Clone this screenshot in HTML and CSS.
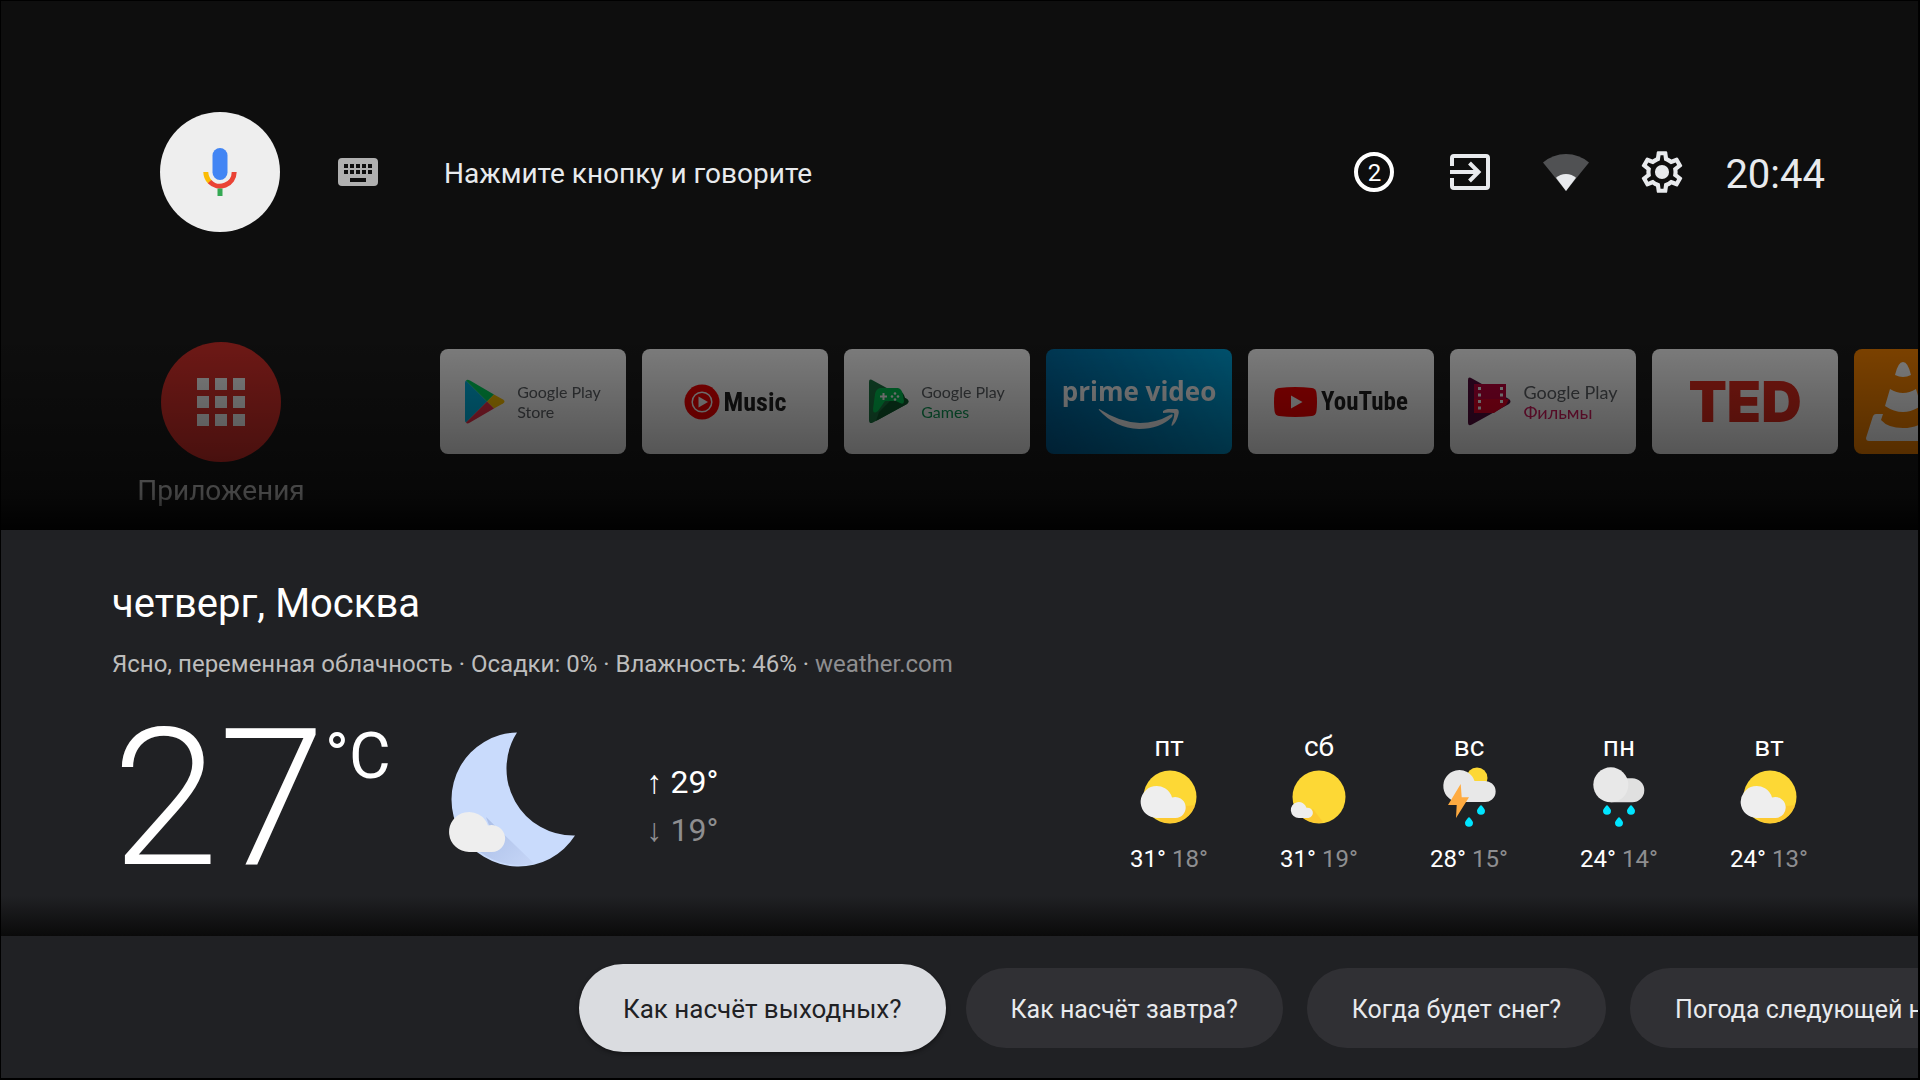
FILE: index.html
```html
<!DOCTYPE html>
<html lang="ru">
<head>
  <meta charset="UTF-8" />
  <meta name="viewport" content="width=device-width, initial-scale=1.0"/>
  <title>Android TV</title>
  <link rel="stylesheet" href="styles.css">
</head>
<body>

  <header class="top-bar">
    <button class="mic-btn" aria-label="Голосовой поиск">
      <svg width="48" height="48" viewBox="0 0 48 48">
        <rect x="16.5" y="0" width="15" height="32" rx="7.5" fill="#4285f4"/>
        <path d="M9.8 24A14.2 14.2 0 0 0 14 34" fill="none" stroke="#fbbc05" stroke-width="5"/>
        <path d="M13.6 33.6A14.2 14.2 0 0 0 38.2 24" fill="none" stroke="#ea4335" stroke-width="5"/>
        <path d="M21.5 40.5h5V48h-5z" fill="#34a853"/>
      </svg>
    </button>
    <button class="icon-btn keyboard-btn" aria-label="Клавиатура">
      <svg width="40" height="28" viewBox="0 0 40 28">
        <rect width="40" height="28" rx="4" fill="#b0b0b0"/>
        <path d="M6 8H34M6 14H34" stroke="#0e0e0e" stroke-width="4" stroke-dasharray="4 2"/>
        <path d="M12 20h16v4H12z" fill="#0e0e0e"/>
      </svg>
    </button>
    <p class="hint">Нажмите кнопку и говорите</p>

    <div class="status">
      <button class="icon-btn badge-btn" aria-label="Уведомления: 2"><span class="count">2</span></button>
      <button class="icon-btn" aria-label="Источник сигнала">
        <svg width="48" height="48" viewBox="0 0 48 48" fill="none" stroke="#e8eaed" stroke-width="4">
          <path d="M6 18V10a2 2 0 0 1 2-2H40a2 2 0 0 1 2 2V38a2 2 0 0 1-2 2H8a2 2 0 0 1-2-2V30"/>
          <path d="M4 24H33M23.5 15l9 9-9 9"/>
        </svg>
      </button>
      <button class="icon-btn" aria-label="Сеть">
        <svg width="48" height="48" viewBox="0 0 48 48">
          <path d="M24 43L1 14.5Q11 6 24 6T47 14.5Z" fill="#505153"/>
          <path d="M24 43L14 29.8Q18 26 24 26T34 29.8Z" fill="#e8eaed"/>
        </svg>
      </button>
      <button class="icon-btn" aria-label="Настройки">
        <svg width="50" height="50" viewBox="0 0 24 24" fill="#e8eaed">
          <path d="M19.43 12.98c.04-.32.07-.64.07-.98 0-.34-.03-.66-.07-.98l2.11-1.65c.19-.15.24-.42.12-.64l-2-3.46c-.09-.16-.26-.25-.44-.25-.06 0-.12.01-.17.03l-2.49 1c-.52-.4-1.08-.73-1.69-.98l-.38-2.65C14.46 2.18 14.25 2 14 2h-4c-.25 0-.46.18-.49.42l-.38 2.65c-.61.25-1.17.59-1.69.98l-2.49-1c-.06-.02-.12-.03-.18-.03-.17 0-.34.09-.43.25l-2 3.46c-.13.22-.07.49.12.64l2.11 1.65c-.04.32-.07.65-.07.98 0 .33.03.66.07.98l-2.11 1.65c-.19.15-.24.42-.12.64l2 3.46c.09.16.26.25.44.25.06 0 .12-.01.17-.03l2.49-1c.52.4 1.08.73 1.69.98l.38 2.65c.03.24.24.42.49.42h4c.25 0 .46-.18.49-.42l.38-2.65c.61-.25 1.17-.59 1.69-.98l2.49 1c.06.02.12.03.18.03.17 0 .34-.09.43-.25l2-3.46c.12-.22.07-.49-.12-.64l-2.11-1.65zm-1.98-1.71c.04.31.05.52.05.73 0 .21-.02.43-.05.73l-.14 1.13.89.7 1.08.84-.7 1.21-1.27-.51-1.04-.42-.9.68c-.43.32-.84.56-1.25.73l-1.06.43-.16 1.13-.2 1.35h-1.4l-.19-1.35-.16-1.13-1.06-.43c-.43-.18-.83-.41-1.23-.71l-.91-.7-1.06.43-1.27.51-.7-1.21 1.08-.84.89-.7-.14-1.13c-.03-.31-.05-.54-.05-.74s.02-.43.05-.73l.14-1.13-.89-.7-1.08-.84.7-1.21 1.27.51 1.04.42.9-.68c.43-.32.84-.56 1.25-.73l1.06-.43.16-1.13.2-1.35h1.39l.19 1.35.16 1.13 1.06.43c.43.18.83.41 1.23.71l.91.7 1.06-.43 1.27-.51.7 1.21-1.07.85-.89.7.14 1.13z"/>
          <circle cx="12" cy="12" r="3.4"/>
        </svg>
      </button>
      <time class="clock">20:44</time>
    </div>
  </header>

  <nav class="launcher">
    <a class="apps-link" href="#apps">
      <span class="apps-circle">
        <svg width="48" height="48" viewBox="0 0 48 48" stroke="#fff" stroke-width="12" stroke-dasharray="12 6">
          <path d="M0 6H48M0 24H48M0 42H48"/>
        </svg>
      </span>
      <span class="apps-label">Приложения</span>
    </a>

    <div class="cards">
      <a class="card" href="#play-store">
        <svg width="40" height="45" viewBox="0 0 40 45">
          <path d="M1 1.5L22 22.5L1 43.5Q0 43 0 41V4Q0 2 1 1.5Z" fill="#00b8e6"/>
          <path d="M1 1.5Q2 0 5 1.5L29 15.5L22 22.5Z" fill="#00d95f"/>
          <path d="M29 15.5L38 20.5Q41 22.5 38 24.5L29 29.5L22 22.5Z" fill="#ffc400"/>
          <path d="M1 43.5Q2 45.5 5 43.5L29 29.5L22 22.5Z" fill="#f0324b"/>
        </svg>
        <span class="play-name">Google Play<br>Store</span>
      </a>
      <a class="card card-tight" href="#music">
        <svg width="36" height="36" viewBox="0 0 36 36">
          <circle cx="18" cy="18" r="17.5" fill="#f00"/>
          <circle cx="18" cy="18" r="9.8" fill="none" stroke="#fff" stroke-width="1.5"/>
          <path d="M14.5 12.5L24 18L14.5 23.5Z" fill="#fff"/>
        </svg>
        <span class="yt-name yt-music">Music</span>
      </a>
      <a class="card" href="#play-games">
        <svg width="40" height="45" viewBox="0 0 40 45">
          <path d="M0 3Q0-1 4 1.5L38 20Q41 22.5 38 25L4 43.5Q0 45.5 0 41Z" fill="#1b7a43"/>
          <path d="M10 33L31 12Q35 14 36 19L38 20Q41 22.5 38 25L7 42Z" fill="#0c5a2c"/>
          <path d="M11 9H29Q33 10 34 16L35 22Q35 26 31 24L27 22H16L9 32Q4 36 4 30L6 15Q7 10 11 9Z" fill="#00c853"/>
          <path d="M11 17.5h7M14.5 14v7" stroke="#fff" stroke-width="2"/>
          <g fill="#fff"><circle cx="26" cy="14.5" r="1.3"/><circle cx="26" cy="20.5" r="1.3"/><circle cx="23" cy="17.5" r="1.3"/><circle cx="29" cy="17.5" r="1.3"/></g>
        </svg>
        <span class="play-name">Google Play<br><span class="green">Games</span></span>
      </a>
      <a class="card prime" href="#prime">
        <span class="prime-name">prime video</span>
        <svg width="82" height="22" viewBox="0 0 82 22" fill="#fff">
          <path d="M1 1Q0-1 3 1Q21 13 42 14Q58 14 72 6Q76 4 74 8Q62 20 41 20Q17 19 1 1Z"/>
          <path d="M65 2Q72-2 79 0Q82 1 80 7Q78 14 74 17Q73 17 74 14Q77 7 76 4Q72 3 65 4Z"/>
        </svg>
      </a>
      <a class="card card-tight" href="#youtube">
        <svg width="43" height="30" viewBox="0 0 43 30">
          <path d="M5 1Q21-1 38 1Q42 1.5 42.5 6Q43.5 15 42.5 24Q42 28.5 38 29Q21 31 5 29Q1 28.5 .5 24Q-.5 15 .5 6Q1 1.5 5 1Z" fill="#f00"/>
          <path d="M17 8.5L28.5 15L17 21.5Z" fill="#fff"/>
        </svg>
        <span class="yt-name">YouTube</span>
      </a>
      <a class="card card-movies" href="#play-movies">
        <svg width="43" height="49" viewBox="0 0 43 49">
          <path d="M0 3Q0-1 4 1.5L41 22Q44 24.5 41 27L4 47.5Q0 50 0 45Z" fill="#560a3c"/>
          <path d="M6 7H38V26H6Z" fill="#c8003c"/>
          <path d="M6 22H41L38 28L26 36H6Z" fill="#e60026"/>
          <path d="M11.5 10V34M33.5 10V28" stroke="#fff" stroke-width="3" stroke-dasharray="3 3.5"/>
        </svg>
        <span class="play-name">Google Play<br><span class="pink">Фильмы</span></span>
      </a>
      <a class="card ted" href="#ted">TED</a>
      <a class="card vlc" href="#vlc" aria-label="VLC">
        <svg width="74" height="80" viewBox="0 0 74 80" fill="#fff">
          <path d="M29 13Q32 0 37 0T45 13Q37 17 29 13Z"/>
          <path d="M24 27Q37 35 50 27L55 44Q37 56 19 44Z"/>
          <path d="M10 52H17L15 58Q22 66 37 66T59 58L57 52H64Q66 52 67 54L74 76Q74 79 71 79H3Q0 79 0 76L7 54Q8 52 10 52Z"/>
        </svg>
      </a>
    </div>
  </nav>

  <main class="weather">
    <h1>четверг, Москва</h1>
    <p class="summary">Ясно, переменная облачность · Осадки: 0% · Влажность: 46% · <a href="#weather">weather.com</a></p>

    <div class="weather-row">
      <span class="temp">27</span>
      <span class="unit">°C</span>
      <svg class="moon" width="128" height="136" viewBox="0 0 128 136">
        <defs>
          <linearGradient id="shade" x1="0" y1="0" x2="1" y2="1">
            <stop offset="0" stop-color="#a9bde6"/>
            <stop offset="1" stop-color="#c6d6f7"/>
          </linearGradient>
        </defs>
        <path d="M69 1.5A67 67 0 1 0 127 104.5A67 67 0 0 1 69 1.5Z" fill="#c9dbfc"/>
        <path d="M38 86L86 132.5A67 67 0 0 1 32 121L50 118Z" fill="url(#shade)"/>
        <path d="M21 121A20 20 0 1 1 40 94.5A13.5 13.5 0 1 1 44 121Z" fill="#eee"/>
      </svg>
      <div class="range">
        <div>↑ 29°</div>
        <div class="low">↓ 19°</div>
      </div>

      <ul class="forecast">
        <li>
          <span class="day">пт</span>
          <svg width="64" height="64" viewBox="0 0 64 64">
            <circle cx="33" cy="31" r="26.5" fill="#fdd835"/>
            <path d="M39 34L50 40L58 39A26.5 26.5 0 0 1 25 56L21 52Z" fill="#fbc02d" opacity=".6"/>
            <path d="M19.7 52A16 16 0 1 1 35 31.5A10.5 10.5 0 1 1 38.5 52Z" fill="#eee"/>
          </svg>
          <span class="temps">31° <span class="low">18°</span></span>
        </li>
        <li>
          <span class="day">сб</span>
          <svg width="64" height="64" viewBox="0 0 64 64">
            <circle cx="32" cy="31" r="26.5" fill="#fdd835"/>
            <path d="M26 43L36 56Q26 59 16 52Z" fill="#fbc02d" opacity=".6"/>
            <path d="M12 52A8 8 0 1 1 19.5 41.8A5.2 5.2 0 1 1 21.5 52Z" fill="#eee"/>
          </svg>
          <span class="temps">31° <span class="low">19°</span></span>
        </li>
        <li>
          <span class="day">вс</span>
          <svg width="64" height="64" viewBox="-1 0 64 64">
            <circle cx="39" cy="12" r="10.5" fill="#fdd835"/>
            <path d="M22 36A16 16 0 1 1 36.5 15H45.6A10.6 10.6 0 1 1 45.6 36Z" fill="#e8e8e8"/>
            <path d="M22.7 18L10 39H18.7L18 52L31 31.3H23.7Z" fill="#ffab40"/>
            <path d="M43 39Q47 43 47 44.7A4 4 0 0 1 39 44.7Q39 43 43 39ZM31 51Q35 55 35 56.7A4 4 0 0 1 27 56.7Q27 55 31 51Z" fill="#00e5ff"/>
          </svg>
          <span class="temps">28° <span class="low">15°</span></span>
        </li>
        <li>
          <span class="day">пн</span>
          <svg width="64" height="64" viewBox="-1 0 64 64">
            <path d="M22.8 36.3V12.3H44.3A12 12 0 0 1 44.3 36.3Z" fill="#e0e0e0"/>
            <circle cx="22.8" cy="18.8" r="17.5" fill="#e8e8e8"/>
            <path d="M19 39Q23 43 23 44.7A4 4 0 0 1 15 44.7Q15 43 19 39ZM43 39Q47 43 47 44.7A4 4 0 0 1 39 44.7Q39 43 43 39ZM31 51Q35 55 35 56.7A4 4 0 0 1 27 56.7Q27 55 31 51Z" fill="#00e5ff"/>
          </svg>
          <span class="temps">24° <span class="low">14°</span></span>
        </li>
        <li>
          <span class="day">вт</span>
          <svg width="64" height="64" viewBox="0 0 64 64">
            <circle cx="33" cy="31" r="26.5" fill="#fdd835"/>
            <path d="M39 34L50 40L58 39A26.5 26.5 0 0 1 25 56L21 52Z" fill="#fbc02d" opacity=".6"/>
            <path d="M19.7 52A16 16 0 1 1 35 31.5A10.5 10.5 0 1 1 38.5 52Z" fill="#eee"/>
          </svg>
          <span class="temps">24° <span class="low">13°</span></span>
        </li>
      </ul>
    </div>
  </main>

  <footer class="suggestions">
    <button class="chip active">Как насчёт выходных?</button>
    <button class="chip">Как насчёт завтра?</button>
    <button class="chip">Когда будет снег?</button>
    <button class="chip">Погода следующей ночью</button>
  </footer>

</body>
</html>
```
FILE: styles.css
```css
* {
  box-sizing: border-box;
}

body {
  margin: 0;
  min-height: 100vh;
  display: flex;
  flex-direction: column;
  overflow: hidden;
  background: #0e0e0e;
  border: 1px solid #000;
  border-width: 1px 2px 2px 1px;
  color: #fff;
  font-family: Roboto, "Noto Sans", sans-serif;
}

button {
  padding: 0;
  border: none;
  background: none;
  color: inherit;
  font-family: inherit;
  cursor: pointer;
}

a {
  color: inherit;
  text-decoration: none;
}

svg {
  display: block;
  flex-shrink: 0;
}

/* top bar */
.top-bar {
  display: flex;
  align-items: center;
  padding: 111px 93px 0 159px;
}

.mic-btn,
.apps-circle {
  display: flex;
  align-items: center;
  justify-content: center;
  width: 120px;
  height: 120px;
  border-radius: 50%;
}

.mic-btn {
  background: #eee;
}

.icon-btn {
  display: flex;
  align-items: center;
  justify-content: center;
  width: 48px;
  height: 48px;
}

.keyboard-btn {
  margin-left: 54px;
}

.hint {
  margin: 0 0 0 62px;
  padding-top: 4px;
  color: #e8eaed;
  font-size: 28px;
  line-height: 32px;
}

.status {
  display: flex;
  align-items: center;
  gap: 48px;
  margin-left: auto;
}

.count {
  width: 40px;
  height: 40px;
  border: 4px solid #fff;
  border-radius: 50%;
  font-size: 24px;
  line-height: 34px;
}

.clock {
  margin-left: -9px;
  padding-top: 5px;
  color: #e8eaed;
  font-size: 40px;
  line-height: 48px;
}

/* apps row, fades out towards the weather panel */
.launcher {
  position: relative;
  flex: 1;
  display: flex;
  align-items: flex-start;
  gap: 130px;
  padding: 110px 0 23px 129px;
}

.launcher::after {
  content: "";
  position: absolute;
  inset: 100px 0 0;
  background: linear-gradient(rgba(0,0,0,0), rgba(0,0,0,0.32) 60%, rgba(0,0,0,0.48) 82%, rgba(0,0,0,0.9));
  pointer-events: none;
}

.apps-link,
.cards {
  filter: brightness(0.5);
}

.apps-link {
  display: flex;
  flex-direction: column;
  align-items: center;
  width: 182px;
  margin-right: -2px;
  flex-shrink: 0;
}

.apps-circle {
  background: #e0322c;
}

.apps-label {
  margin-top: 13px;
  font-size: 28px;
  line-height: 32px;
}

.cards {
  display: flex;
  gap: 16px;
  margin-top: 7px;
}

.card {
  display: flex;
  align-items: center;
  justify-content: center;
  gap: 12px;
  width: 186px;
  height: 105px;
  flex-shrink: 0;
  border-radius: 8px;
  background: #fff;
}

.card-tight {
  gap: 4px;
}

.play-name {
  color: #5f6368;
  font-family: Lato, Roboto, sans-serif;
  font-size: 16px;
  line-height: 20px;
}

.card-movies .play-name {
  font-size: 18px;
}

.green {
  color: #0f9d58;
}

.pink {
  color: #d81b60;
}

.yt-name {
  color: #212121;
  font-family: "Roboto Condensed", Roboto, sans-serif;
  font-size: 25px;
  font-weight: bold;
}

.yt-music {
  font-size: 26px;
}

.prime {
  flex-direction: column;
  gap: 0;
  background: linear-gradient(60deg, #005f98, #00a8e1);
}

.prime-name {
  font-family: "Open Sans", sans-serif;
  font-size: 26px;
  font-weight: 700;
  line-height: 36px;
}

.ted {
  color: #e62b1e;
  font-family: Inter, sans-serif;
  font-size: 56px;
  font-weight: 900;
}

.vlc {
  justify-content: flex-start;
  padding-left: 12px;
  background: #ff8800;
}

/* weather panel */
.weather {
  padding: 50px 74px 57px 111px;
  background: linear-gradient(#202124, #202124) top / 100% calc(100% - 40px) no-repeat,
    linear-gradient(#202124, #0a0a0a) bottom / 100% 40px no-repeat;
}

h1 {
  margin: 0;
  font-size: 40px;
  font-weight: 400;
  line-height: 48px;
}

.summary {
  margin: 20px 0 39px;
  color: #bdbdbd;
  font-size: 24px;
  line-height: 32px;
}

.summary a,
.low {
  color: #8e8e90;
}

.weather-row {
  display: flex;
  align-items: flex-start;
}

.temp {
  font-size: 192px;
  font-weight: 300;
  line-height: 160px;
}

.unit {
  font-size: 64px;
  line-height: 76px;
}

.moon {
  margin: 12px 71px 0 57px;
}

.range {
  padding-top: 39px;
  font-size: 32px;
  line-height: 48px;
}

.forecast {
  display: flex;
  margin: 12px 0 0 auto;
  padding: 0;
  list-style: none;
}

.forecast li {
  display: flex;
  flex-direction: column;
  align-items: center;
  width: 150px;
}

.day {
  margin-bottom: 3px;
  font-size: 28px;
  line-height: 32px;
}

.temps {
  margin-top: 13px;
  font-size: 24px;
  line-height: 32px;
}

/* suggestion chips */
.suggestions {
  display: flex;
  align-items: center;
  gap: 24px;
  padding: 28px 0 26px 578px;
  background: #202124;
}

.chip {
  flex-shrink: 0;
  height: 80px;
  padding: 2px 45px 0;
  border-radius: 40px;
  background: #303034;
  color: #e8eaed;
  font-size: 25px;
  white-space: nowrap;
}

.chip.active {
  height: 88px;
  margin-right: -4px;
  padding: 2px 44px 0;
  border-radius: 44px;
  background: #dadce0;
  box-shadow: 0 2px 4px rgba(0,0,0,0.4);
  color: #202124;
  font-size: 26px;
}
```
